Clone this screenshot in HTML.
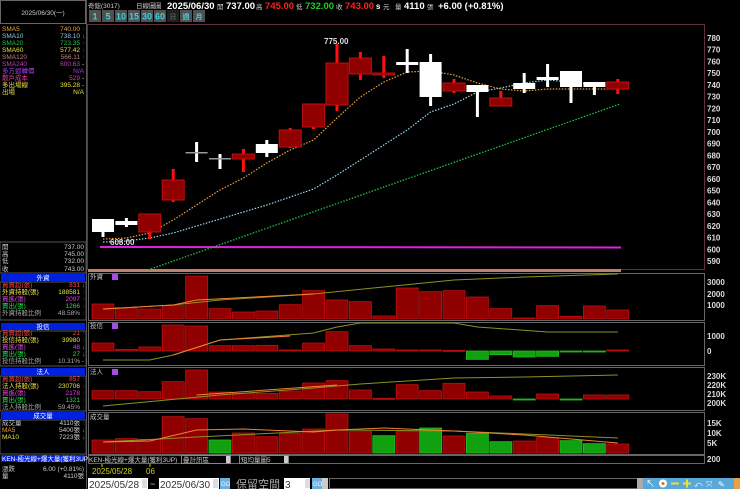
<!DOCTYPE html>
<html><head><meta charset="utf-8">
<style>
html,body{margin:0;padding:0;background:#000;width:740px;height:489px;overflow:hidden}
svg{display:block}
text{font-family:"Liberation Sans","Noto Sans CJK TC",sans-serif}
.s{font-size:6.5px}
.ax{font-size:8px;fill:#ddd;font-weight:bold}
</style></head><body>
<svg id="c" width="740" height="489" viewBox="0 0 740 489" xmlns="http://www.w3.org/2000/svg">
<rect width="740" height="489" fill="#000"/>
<rect x="0.5" y="0.5" width="85" height="23" fill="none" stroke="#666"/>
<text x="43" y="15" class="s" fill="#ccc" text-anchor="middle">2025/06/30(一)</text>
<line x1="86.5" y1="0" x2="86.5" y2="489" stroke="#555"/>
<g class="s">
<text x="2" y="31" fill="#e8a040">SMA5</text><text x="80" y="31" fill="#e8a040" text-anchor="end">740.00</text><text x="82" y="31" fill="#f00">↑</text>
<text x="2" y="38" fill="#8ac8e8">SMA10</text><text x="80" y="38" fill="#8ac8e8" text-anchor="end">738.10</text><text x="82" y="38" fill="#0f0">↓</text>
<text x="2" y="45" fill="#20c040">SMA20</text><text x="80" y="45" fill="#20c040" text-anchor="end">723.35</text><text x="82" y="45" fill="#f00">↑</text>
<text x="2" y="52" fill="#e8e040">SMA60</text><text x="80" y="52" fill="#e8e040" text-anchor="end">577.42</text><text x="82" y="52" fill="#f00">↑</text>
<text x="2" y="59" fill="#c08080">SMA120</text><text x="80" y="59" fill="#c08080" text-anchor="end">566.11</text><text x="82" y="59" fill="#f00">↑</text>
<text x="2" y="66" fill="#c040c0">SMA240</text><text x="80" y="66" fill="#c040c0" text-anchor="end">600.63</text><text x="82" y="66" fill="#ccc">-</text>
<text x="2" y="73" fill="#a040e0">多方迴轉價</text><text x="84" y="73" fill="#a040e0" text-anchor="end">N/A</text>
<text x="2" y="80" fill="#e040a0">散戶成本</text><text x="80" y="80" fill="#e040a0" text-anchor="end">529</text><text x="82" y="80" fill="#ccc">-</text>
<text x="2" y="87" fill="#e8e040">多出場線</text><text x="80" y="87" fill="#e8e040" text-anchor="end">395.28</text><text x="82" y="87" fill="#ccc">-</text>
<text x="2" y="94" fill="#e8e040">出場</text><text x="84" y="94" fill="#e8e040" text-anchor="end">N/A</text>
<rect x="0" y="242" width="86" height="31" fill="#000" stroke="#555"/>
<text x="2" y="249" fill="#ccc">開</text><text x="84" y="249" fill="#ccc" text-anchor="end">737.00</text>
<text x="2" y="256" fill="#ccc">高</text><text x="84" y="256" fill="#ccc" text-anchor="end">745.00</text>
<text x="2" y="263" fill="#ccc">低</text><text x="84" y="263" fill="#ccc" text-anchor="end">732.00</text>
<text x="2" y="271" fill="#ccc">收</text><text x="84" y="271" fill="#ccc" text-anchor="end">743.00</text>
<rect x="1" y="274" width="84" height="7" fill="#0020e0"/><text x="43" y="280" fill="#fff" text-anchor="middle">外資</text>
<text x="2" y="287" fill="#f44">買賣超(張)</text><text x="80" y="287" fill="#f44" text-anchor="end">831</text><text x="82" y="287" fill="#0f0">↓</text>
<text x="2" y="294" fill="#e8e040">外資持股(張)</text><text x="80" y="294" fill="#e8e040" text-anchor="end">188581</text><text x="82" y="294" fill="#f00">↑</text>
<text x="2" y="301" fill="#e040e0">買進(張)</text><text x="80" y="301" fill="#e040e0" text-anchor="end">2097</text><text x="82" y="301" fill="#f00">↑</text>
<text x="2" y="308" fill="#20e040">賣出(張)</text><text x="80" y="308" fill="#20e040" text-anchor="end">1266</text><text x="82" y="308" fill="#f00">↑</text>
<text x="2" y="315" fill="#aaa">外資持股比例</text><text x="80" y="315" fill="#aaa" text-anchor="end">48.58%</text><text x="82" y="315" fill="#f00">↑</text>
<rect x="0" y="282" width="86" height="38" fill="none" stroke="#555"/>
<rect x="1" y="323" width="84" height="7" fill="#0020e0"/><text x="43" y="329" fill="#fff" text-anchor="middle">投信</text>
<text x="2" y="335" fill="#f44">買賣超(張)</text><text x="80" y="335" fill="#f44" text-anchor="end">21</text><text x="82" y="335" fill="#f00">↑</text>
<text x="2" y="342" fill="#e8e040">投信持股(張)</text><text x="80" y="342" fill="#e8e040" text-anchor="end">39980</text><text x="82" y="342" fill="#f00">↑</text>
<text x="2" y="349" fill="#e040e0">買進(張)</text><text x="80" y="349" fill="#e040e0" text-anchor="end">48</text><text x="82" y="349" fill="#0f0">↓</text>
<text x="2" y="356" fill="#20e040">賣出(張)</text><text x="80" y="356" fill="#20e040" text-anchor="end">27</text><text x="82" y="356" fill="#0f0">↓</text>
<text x="2" y="363" fill="#aaa">投信持股比例</text><text x="80" y="363" fill="#aaa" text-anchor="end">10.31%</text><text x="82" y="363" fill="#ccc">-</text>
<rect x="0" y="331" width="86" height="35" fill="none" stroke="#555"/>
<rect x="1" y="368" width="84" height="7" fill="#0020e0"/><text x="43" y="374" fill="#fff" text-anchor="middle">法人</text>
<text x="2" y="381" fill="#f44">買賣超(張)</text><text x="80" y="381" fill="#f44" text-anchor="end">857</text><text x="82" y="381" fill="#f00">↑</text>
<text x="2" y="388" fill="#e8e040">法人持股(張)</text><text x="80" y="388" fill="#e8e040" text-anchor="end">230706</text><text x="82" y="388" fill="#f00">↑</text>
<text x="2" y="395" fill="#e040e0">買進(張)</text><text x="80" y="395" fill="#e040e0" text-anchor="end">2178</text><text x="82" y="395" fill="#f00">↑</text>
<text x="2" y="402" fill="#20e040">賣出(張)</text><text x="80" y="402" fill="#20e040" text-anchor="end">1321</text><text x="82" y="402" fill="#f00">↑</text>
<text x="2" y="409" fill="#aaa">法人持股比例</text><text x="80" y="409" fill="#aaa" text-anchor="end">59.45%</text><text x="82" y="409" fill="#f00">↑</text>
<rect x="0" y="376" width="86" height="35" fill="none" stroke="#555"/>
<rect x="1" y="412" width="84" height="7" fill="#0020e0"/><text x="43" y="418" fill="#fff" text-anchor="middle">成交量</text>
<text x="2" y="425" fill="#ccc">成交量</text><text x="80" y="425" fill="#ccc" text-anchor="end">4110張</text><text x="82" y="425" fill="#f00">↑</text>
<text x="2" y="432" fill="#e8a040">MA5</text><text x="80" y="432" fill="#ccc" text-anchor="end">5400張</text><text x="82" y="432" fill="#0f0">↓</text>
<text x="2" y="439" fill="#e8e040">MA10</text><text x="80" y="439" fill="#ccc" text-anchor="end">7223張</text><text x="82" y="439" fill="#0f0">↓</text>
<rect x="0" y="420" width="86" height="34" fill="none" stroke="#555"/>
<rect x="1" y="455" width="84" height="7" fill="#0020e0"/><text x="2" y="461" fill="#fff">KEN-極光線+爆大量(獲利3UP)</text>
<text x="2" y="471" fill="#ccc">漲跌</text><text x="84" y="471" fill="#ccc" text-anchor="end">6.00 (+0.81%)</text>
<text x="2" y="478" fill="#ccc">量</text><text x="84" y="478" fill="#ccc" text-anchor="end">4110張</text>
</g>
<text x="88" y="8" class="s" fill="#ccc">奇鋐(3017)</text>
<text x="136" y="8" class="s" fill="#ccc">日線圖</text>
<text x="155" y="8" class="s" fill="#ccc">圖</text>
<text x="167" y="9" font-size="9.5" font-weight="bold" fill="#fff">2025/06/30</text>
<text x="217" y="9" class="s" fill="#ccc">開</text>
<text x="226" y="9" font-size="9.5" font-weight="bold" fill="#fff">737.00</text>
<text x="256" y="9" class="s" fill="#ccc">高</text>
<text x="265" y="9" font-size="9.5" font-weight="bold" fill="#f22">745.00</text>
<text x="296" y="9" class="s" fill="#ccc">低</text>
<text x="305" y="9" font-size="9.5" font-weight="bold" fill="#2c2">732.00</text>
<text x="336" y="9" class="s" fill="#ccc">收</text>
<text x="345" y="9" font-size="9.5" font-weight="bold" fill="#f22">743.00</text>
<text x="376" y="9" font-size="8" font-weight="bold" fill="#fff">s</text>
<text x="383" y="9" class="s" fill="#ccc">元</text>
<text x="395" y="9" class="s" fill="#ccc">量</text>
<text x="404" y="9" font-size="9.5" font-weight="bold" fill="#fff">4110</text>
<text x="427" y="9" class="s" fill="#ccc">張</text>
<text x="438" y="9" font-size="9.5" font-weight="bold" fill="#fff">+6.00 (+0.81%)</text>
<g font-size="9" font-weight="bold" fill="#3ad0e0" text-anchor="middle">
<rect x="89" y="10" width="12" height="12" fill="#505050"/><text x="95" y="19.5">1</text>
<rect x="102" y="10" width="12" height="12" fill="#505050"/><text x="108" y="19.5">5</text>
<rect x="115" y="10" width="12" height="12" fill="#505050"/><text x="121" y="19.5">10</text>
<rect x="128" y="10" width="12" height="12" fill="#505050"/><text x="134" y="19.5">15</text>
<rect x="141" y="10" width="12" height="12" fill="#505050"/><text x="147" y="19.5">30</text>
<rect x="154" y="10" width="12" height="12" fill="#505050"/><text x="160" y="19.5">60</text>
<rect x="167" y="10" width="12" height="12" fill="#202020"/><text x="173" y="19" font-size="7" fill="#555">日</text>
<rect x="180" y="10" width="12" height="12" fill="#505050"/><text x="186" y="19" font-size="7">週</text>
<rect x="193" y="10" width="12" height="12" fill="#505050"/><text x="199" y="19" font-size="7">月</text>
</g>
<rect x="87.5" y="24.5" width="617" height="245" fill="none" stroke="#603040"/>
<rect x="88" y="269" width="533" height="3" fill="#c08070"/>
<g id="ax" class="ax"></g>
<g id="pn"></g>
<text x="324" y="44" font-size="8" font-weight="bold" fill="#ddd">775.00</text>
<text x="110" y="245" font-size="8" font-weight="bold" fill="#ddd">608.00</text>
<g class="s">
<text x="90" y="279" fill="#ccc">外資</text><rect x="112" y="274" width="6" height="6" fill="#a050e0"/>
<text x="90" y="328" fill="#ccc">投信</text><rect x="112" y="323" width="6" height="6" fill="#a050e0"/>
<text x="90" y="374" fill="#ccc">法人</text><rect x="112" y="369" width="6" height="6" fill="#a050e0"/>
<text x="90" y="419" fill="#ccc">成交量</text>
</g>
<rect x="88.5" y="455.5" width="616" height="8" fill="#000" stroke="#666"/>
<text x="89" y="462" class="s" fill="#ccc">KEN-極光線+爆大量(獲利3UP)</text>
<rect x="181.5" y="455.5" width="49" height="8" fill="#000" stroke="#888"/><text x="183" y="462" class="s" fill="#ccc">疊計訊區</text><rect x="226" y="456" width="4" height="7" fill="#ccc"/>
<rect x="239.5" y="455.5" width="49" height="8" fill="#000" stroke="#888"/><text x="241" y="462" class="s" fill="#ccc">短均量圖5</text><rect x="284" y="456" width="4" height="7" fill="#ccc"/>
<text x="707" y="462" class="ax">200</text>
<text x="92" y="474" font-size="8" fill="#d0d020">2025/05/28</text>
<text x="146" y="474" font-size="8" fill="#d0d020">06</text>
<line x1="102" y1="464" x2="102" y2="467" stroke="#d0d020"/><line x1="150" y1="464" x2="150" y2="467" stroke="#d0d020"/>
<rect x="88" y="478" width="60" height="11" fill="#fff"/><text x="89" y="488" font-size="10" fill="#333">2025/05/28</text><rect x="142" y="479" width="5" height="9" fill="#ddd"/>
<text x="150" y="487" font-size="9" fill="#ccc">~</text>
<rect x="159" y="478" width="60" height="11" fill="#fff"/><text x="160" y="488" font-size="10" fill="#333">2025/06/30</text><rect x="213" y="479" width="5" height="9" fill="#ddd"/>
<rect x="220" y="478" width="10" height="11" fill="#6ab0e0"/><text x="221" y="486" font-size="6" fill="#fff">GO</text>
<text x="236" y="488" font-size="11" fill="#aaa">保留空間</text>
<rect x="284" y="478" width="26" height="11" fill="#fff"/><text x="285" y="488" font-size="10" fill="#333">3</text><rect x="305" y="479" width="5" height="9" fill="#ddd"/>
<rect x="312" y="478" width="10" height="11" fill="#6ab0e0"/><text x="313" y="486" font-size="6" fill="#fff">GO</text>
<rect x="322" y="478" width="6" height="11" fill="#ccc"/>
<rect x="329.5" y="478.5" width="313" height="10" fill="#000" stroke="#666"/>
<rect x="637" y="478" width="6" height="11" fill="#aaa"/>
<rect x="643" y="478" width="92" height="11" fill="#5aa8d8"/>
<text x="646" y="487" font-size="9" fill="#fff">↖</text>
<circle cx="663" cy="483.5" r="4" fill="#fff"/><circle cx="663" cy="483.5" r="1.5" fill="#e07020"/>
<rect x="671" y="482.5" width="8" height="2" fill="#e8e040"/>
<rect x="683" y="482.5" width="8" height="2" fill="#e8e040"/><rect x="686" y="479.5" width="2" height="8" fill="#e8e040"/>
<text x="694" y="487" font-size="8" fill="#fff">⤺</text>
<text x="706" y="487" font-size="8" fill="#fff">⤧</text>
<text x="718" y="487" font-size="8" fill="#fff">✎</text>
<rect x="734" y="478" width="6" height="11" fill="#e8a040"/>
</svg>
<script>
var NS="http://www.w3.org/2000/svg";
function el(p,t,a){var e=document.createElementNS(NS,t);for(var k in a)e.setAttribute(k,a[k]);p.appendChild(e);return e;}
var svg=document.getElementById('pn');
function X(i){return 92+23.4*i;}
var ax=document.getElementById('ax');
for(var p=780;p>=590;p-=10){var t=el(ax,'text',{x:707,y:38+(780-p)*1.1737+3});t.textContent=p;}
[[285,'3000'],[297,'2000'],[308,'1000'],[339,'1000'],[354,'0'],[379,'230K'],[388,'220K'],[397,'210K'],[406,'200K'],[426,'15K'],[436,'10K'],[446,'5K']].forEach(function(a){var t=el(ax,'text',{x:707,y:a[0]});t.textContent=a[1];});
[[273,47],[322,43],[367,43],[412,42]].forEach(function(f){el(svg,'rect',{x:88.5,y:f[0]+0.5,width:616,height:f[1],fill:'none',stroke:'#666'});});
function pl(pts,col,dash,w){el(svg,'polyline',{points:pts.map(function(v,i){return (X(i)+11)+','+v;}).join(' '),fill:'none',stroke:col,'stroke-width':w||1.2,'stroke-dasharray':dash||''});}
el(svg,'line',{x1:100,y1:247,x2:621,y2:247.5,stroke:'#e020e0','stroke-width':2});
el(svg,'line',{x1:148,y1:270,x2:620,y2:104,stroke:'#20c040','stroke-width':1.3,'stroke-dasharray':'1.5,1.5'});
pl([242,241,238,233,226,219,212,205,197,189,175,160,145,130,112,104,92,88,83,80,82,85,86],'#9ad8f0','1.5,1.5');
pl([239,238,233,220,205,190,178,163,150,140,118,97,82,72,71,75,83,89,91,89,89,89,89],'#f0a040','1.5,1.5');
var C=[[219,232,219,237,0],[221,225,218,227,0],[214,232,214,239,1],[180,200,169,202,1],[152,153,142,162,2],[158,159,154,169,2],[154,159,149,172,1],[144,153,140,157,0],[130,147,128,148,1],[104,127,104,129,1],[63,105,44,111,1],[58,74,52,80,1],[73,75,56,78,1],[62,65,49,73,0],[62,97,54,106,0],[83,91,79,93,1],[85,92,85,117,0],[98,106,91,106,1],[83,89,73,93,0],[77,80,64,87,0],[71,87,71,103,0],[82,87,82,95,0],[82,89,79,94,1]];
C.forEach(function(c,i){var x=X(i);var red=c[4]==1;var col=red?'#ff1010':'#fff';
el(svg,'rect',{x:x+9.5,y:c[2],width:3,height:c[3]-c[2],fill:col});
if(c[4]==2){el(svg,'rect',{x:x,y:c[0],width:22,height:1.5,fill:'#999'});}
else el(svg,'rect',{x:x,y:c[0],width:22,height:Math.max(c[1]-c[0],2),fill:red?'#900000':'#fff',stroke:red?'#c01010':'none','stroke-width':red?1:0});});
function bars(base,tops,green){tops.forEach(function(t,i){var x=X(i);var g=green&&green.indexOf(i)>=0;var y1=Math.min(t,base),h=Math.abs(base-t);el(svg,'rect',{x:x,y:y1,width:22,height:Math.max(h,1),fill:g?'#10a010':'#900000',stroke:g?'#20c020':'#c01010','stroke-width':0.8});});}
function Y(v){return 270+v/3;}
bars(319,[102,113,117,107,18,116,126,123,104,62,90,95,138,54,65,62,81,116,144,107,139,108,120].map(Y));
bars(351,[219,238,231,165,168,227,227,226,240,219,185,227,237,240,240,241,268,254,261,259,244,244,240].map(Y),[16,17,18,19,20,21]);
bars(399,[362,362,365,335,300,366,370,370,363,339,332,360,385,344,362,340,366,378,390,372,388,375,375].map(Y),[18,20]);
bars(453,[510,506,508,440,446,510,489,500,490,477,432,485,497,485,474,498,490,515,513,503,512,521,522].map(Y),[5,12,14,16,17,20,21]);
function lp(pts,col){el(svg,'polyline',{points:pts.map(function(p){return (X(p[0])+11)+','+p[1];}).join(' '),fill:'none',stroke:col,'stroke-width':1});}
lp([[0,309],[3,305],[5,300],[9,294],[12,287],[15,280],[18,277],[22,274]],'#909020');
lp([[0,309],[3,305],[4,300],[9,294]],'#f08030');
lp([[0,360],[2,360],[3,355],[5,340],[9,333],[10,327],[11,323],[15,323],[16,327],[19,332],[22,332]],'#909020');
lp([[3,355],[5,340],[8,336]],'#f08030');
lp([[0,406],[5,395],[9,388],[11,384],[15,378],[18,377],[22,375]],'#909020');
lp([[4,395],[10,385]],'#f08030');
lp([[0,442],[4,437],[10,430],[15,431],[22,438]],'#909020');
lp([[0,442],[2,441],[4,430],[6,429],[9,432],[10,430],[12,428],[15,431],[18,435],[22,443]],'#f08030');
</script>
</body></html>
